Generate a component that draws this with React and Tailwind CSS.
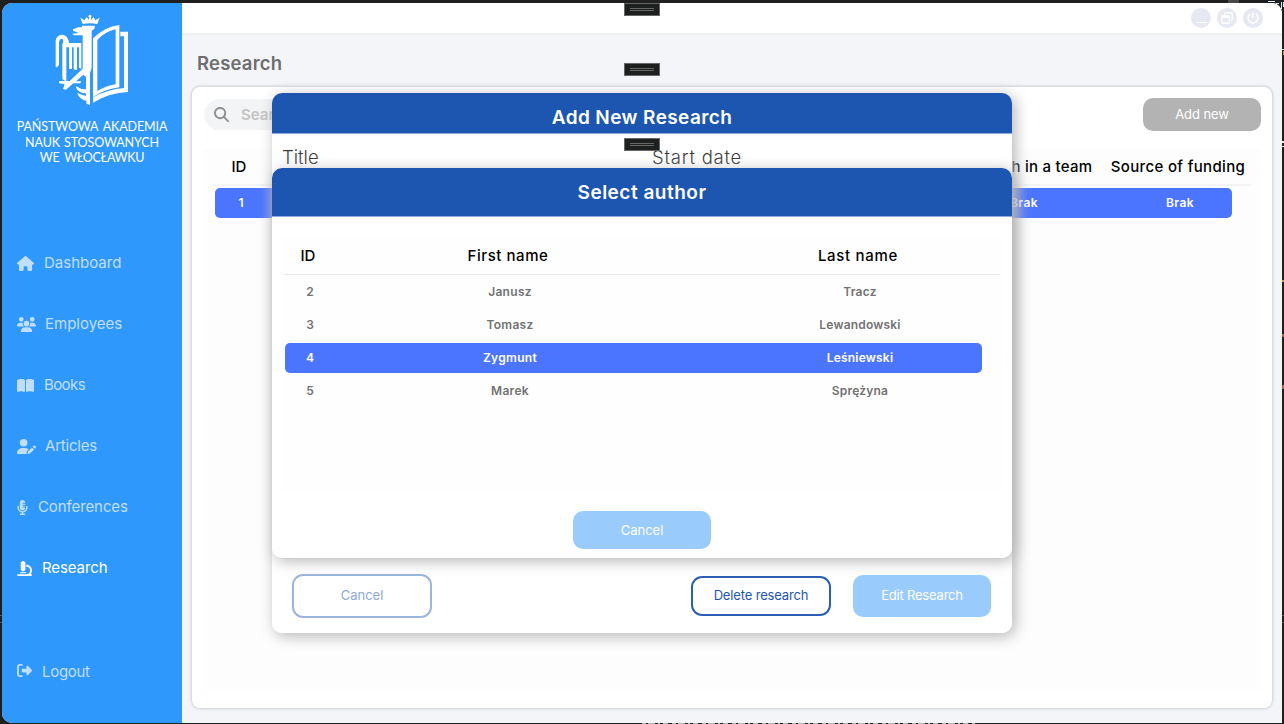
import React from "react";
import {
  FaHouse,
  FaUsers,
  FaBookOpen,
  FaUserPen,
  FaMicrophoneLines,
  FaMicroscope,
  FaRightFromBracket,
  FaMagnifyingGlass,
  FaPowerOff,
} from "react-icons/fa6";

function Logo() {
  return (
    <svg viewBox="0 0 300 315" className="-ml-[4px] h-[105px] w-[100px]" fill="#fff" fillRule="evenodd">
      {/* crown */}
      <path d="M128 57 L121 38 L134 46 L139 36 L147 44 L147 38 Q143 30 150 29 Q157 30 153 38 L153 44 L161 36 L166 46 L179 38 L172 57 Q150 52 128 57Z" />
      {/* head, beak and body */}
      <path d="M126 62 H165 L163 71 L155 77 V188 L150 205 V300 L139 296 V287 Q120 285 111 264 L128 270 Q135 273 138 272 V265 Q115 264 108 248 V244 L125 252 L138 253 V216 L130 209 L108 229 L124 229 L121 235 H100 L78 254 L69 252 L74 238 L57 235 V228 L89 228 L128 191 V91 H101 L97 86 L116 84 L99 77 V73 L115 67 H126Z" />
      {/* wing */}
      <path d="M47 186 V107 Q49 90 67 89 Q84 90 87 114 H124 V192 L117 188 V127 H111 V195 H104 L101 190 V127 H96 V192 H87 V127 H79 V230 L67 222 V118 Q73 105 66 101 Q58 102 57 112 V180 L51 187Z" />
      {/* book */}
      <path d="M159 100 Q192 66 238 60 V247 Q197 252 159 276Z M172 105 V258 Q196 243 227 238 V73 Q191 82 172 105Z" />
      <path d="M241 80 H264 V261 Q208 263 159 293 V277 Q203 253 252 249 V94 H241Z" />
    </svg>
  );
}

const navItems = [
  { icon: FaHouse, label: "Dashboard", box: "w-[17px]", text: "ml-[10px]" },
  { icon: FaUsers, label: "Employees", box: "w-[19px]", text: "ml-[9px]" },
  { icon: FaBookOpen, label: "Books", box: "w-[17px]", text: "ml-[10px] tracking-[-0.6px]" },
  { icon: FaUserPen, label: "Articles", box: "w-[19px]", text: "ml-[9px] tracking-[-0.2px]" },
  { icon: FaMicrophoneLines, label: "Conferences", box: "w-[11px]", text: "ml-[10px] tracking-[-0.1px]" },
  { icon: FaMicroscope, label: "Research", box: "w-[15px]", text: "ml-[10px] tracking-[-0.1px]", active: true },
];

function NavItem({ item }) {
  const Icon = item.icon;
  return (
    <div className={`flex h-[61px] items-center pl-[15px] text-[15px] ${item.active ? "text-white" : "text-[#c0dffe]"}`}>
      <Icon preserveAspectRatio="none" className={`h-[15px] shrink-0 ${item.box}`} />
      <span className={item.text}>{item.label}</span>
    </div>
  );
}

function Sidebar() {
  return (
    <aside className="flex w-[180px] shrink-0 flex-col bg-[#2f98fd]">
      <div className="flex h-[107px] justify-center pt-[2px]">
        <Logo />
      </div>
      <div className="mt-[9px] flex flex-col items-center font-['Lato',sans-serif] text-[12.5px] leading-[15.5px] text-white">
        <span className="tracking-[-0.1px] whitespace-nowrap [word-spacing:2px]">PAŃSTWOWA AKADEMIA</span>
        <span className="tracking-[-0.1px] whitespace-nowrap [word-spacing:1px]">NAUK STOSOWANYCH</span>
        <span className="tracking-[-0.25px] whitespace-nowrap [word-spacing:2px]">WE WŁOCŁAWKU</span>
      </div>
      <nav className="mt-[67px] flex flex-col">
        {navItems.map((item) => (
          <NavItem key={item.label} item={item} />
        ))}
      </nav>
      <div className="mt-[43px]">
        <NavItem item={{ icon: FaRightFromBracket, label: "Logout", box: "w-[15px] -mt-[3px]", text: "ml-[10px] tracking-[-0.3px]" }} />
      </div>
    </aside>
  );
}

function WindowButtons() {
  const round = "flex size-[20px] items-center justify-center rounded-full bg-[#e6e8f2] text-white";
  return (
    <div className="flex gap-[6px]">
      <div className={round}>
        <div className="mt-[9px] h-[1.5px] w-[11px] rounded bg-white" />
      </div>
      <div className={round}>
        <svg viewBox="0 0 12 12" className="size-[12px]" fill="none" stroke="currentColor" strokeWidth="1.4">
          <path d="M3.6 2.6V1.9Q3.6.8 4.7.8H10Q11.2.8 11.2 1.9V7Q11.2 8.2 10 8.2H9.6" />
          <rect x=".8" y="3.8" width="7.6" height="7.4" rx="1" />
          <path d="M1 5H8.2" strokeWidth="2" />
        </svg>
      </div>
      <div className={round}>
        <FaPowerOff className="size-[12px]" />
      </div>
    </div>
  );
}

function MainPanel() {
  return (
    <section className="ml-[10px] flex h-[621px] w-[1080px] flex-col rounded-[8px] bg-white px-[12px] pt-[11px] shadow-[0_0_3px_1px_rgba(0,0,0,0.16)]">
      <div className="flex items-center justify-between">
        <div className="flex h-[31px] w-[300px] items-center rounded-full bg-[#f3f4f6] pl-[10px]">
          <FaMagnifyingGlass className="size-[15px] text-[#8f8f8f]" />
          <span className="ml-[12px] pt-[2px] text-[15px] font-semibold text-[#c3c3c3]">Search...</span>
        </div>
        <div className="-mr-[1px] flex h-[33px] w-[118px] items-center justify-center rounded-[10px] bg-[#b3b3b3] pt-px text-[13px] tracking-[-0.1px] text-white">
          Add new
        </div>
      </div>
      <div className="mt-[18px] h-[541px] bg-[#fdfdfd] pl-[9px]">
        <div className="flex h-[37px] w-[1038px] items-center border-b-2 border-[#f4f4f4] pt-[2px] text-[15px] font-medium whitespace-nowrap text-black">
          <div className="w-[52px] shrink-0 text-center">ID</div>
          <div className="w-[679px] shrink-0" />
          <div className="w-[156px] shrink-0 text-center tracking-[0.25px]">Research in a team</div>
          <div className="w-[156px] shrink-0 text-center tracking-[0.35px]">Source of funding</div>
        </div>
        <div className="mt-[2px] ml-[2px] flex h-[30px] w-[1017px] items-center rounded-[5px] bg-[#4c75ff] text-[12px] font-semibold text-white">
          <div className="w-[52px] shrink-0 text-center">1</div>
          <div className="w-[679px] shrink-0" />
          <div className="w-[156px] shrink-0 text-center tracking-[0.4px]">Brak</div>
          <div className="w-[156px] shrink-0 text-center tracking-[0.4px]">Brak</div>
        </div>
      </div>
    </section>
  );
}

function ResearchDialog() {
  return (
    <div className="absolute top-[93px] left-[272px] flex h-[540px] w-[740px] flex-col overflow-hidden rounded-[10px] bg-white">
      <div className="flex h-[41px] shrink-0 justify-center border-b border-[#8eaad7] bg-[#1d56b0] text-[19px] leading-[50px] font-semibold tracking-[0.4px] text-white">
        Add New Research
      </div>
      <div className="flex h-[46px] items-center pt-px pl-[10px] text-[18.5px] font-light text-[#3c3c3c]">
        <div className="w-[370px]">Title</div>
        <div className="tracking-[0.75px]">Start date</div>
      </div>
      <div className="mt-auto flex h-[74px] items-center px-[20px] text-[13px]">
        <div className="flex h-[44px] w-[140px] items-center justify-center rounded-[11px] border-2 border-[#9cb5dc] text-[#8eaad7]">
          Cancel
        </div>
        <div className="ml-[259px] flex h-[40px] w-[140px] items-center justify-center rounded-[11px] border-2 border-[#2a5fb5] tracking-[-0.15px] text-[#1d56b0]">
          Delete research
        </div>
        <div className="ml-[22px] flex h-[42px] w-[138px] items-center justify-center rounded-[10px] bg-[#99cbfd] tracking-[-0.2px] text-white">
          Edit Research
        </div>
      </div>
    </div>
  );
}

const authors = [
  ["2", "Janusz", "Tracz"],
  ["3", "Tomasz", "Lewandowski"],
  ["4", "Zygmunt", "Leśniewski"],
  ["5", "Marek", "Sprężyna"],
];

function AuthorDialog() {
  return (
    <div className="absolute top-[168px] left-[272px] flex h-[390px] w-[740px] flex-col overflow-hidden rounded-[10px] bg-white">
      <div className="flex h-[49px] shrink-0 justify-center border-b border-[#8eaad7] bg-[#1d56b0] text-[19px] leading-[50px] font-semibold tracking-[0.5px] text-white">
        Select author
      </div>
      <div className="mx-[10px] mt-[20px] h-[254px] overflow-hidden bg-[#fefefe] pl-[1px]">
        <div className="flex h-[38px] w-[717px] items-center border-b border-[#ececec] pt-[2px] text-[15px] font-medium text-black">
          <div className="w-[50px] shrink-0 text-center">ID</div>
          <div className="w-[350px] shrink-0 text-center tracking-[0.55px]">First name</div>
          <div className="w-[350px] shrink-0 text-center tracking-[0.7px]">Last name</div>
        </div>
        <div className="mt-[2px] ml-[2px] flex flex-col gap-[3px]">
          {authors.map(([id, first, last]) => (
            <div
              key={id}
              className={`flex h-[30px] w-[697px] items-center rounded-[5px] text-[12px] font-semibold ${
                id === "4" ? "bg-[#4c75ff] text-white" : "text-[#727272]"
              }`}
            >
              <div className="w-[50px] shrink-0 text-center">{id}</div>
              <div className="w-[350px] shrink-0 text-center tracking-[0.3px]">{first}</div>
              <div className="w-[350px] shrink-0 text-center tracking-[0.2px]">{last}</div>
            </div>
          ))}
        </div>
      </div>
      <div className="mx-auto mt-[20px] flex h-[38px] w-[138px] items-center justify-center rounded-[10px] bg-[#99cbfd] pt-[2px] text-[13px] text-white">
        Cancel
      </div>
    </div>
  );
}

function Grip({ className }) {
  return (
    <div className={`absolute left-[624px] flex h-[13px] w-[36px] flex-col items-center justify-center gap-px border border-[#666] bg-[#1e1f1f] ${className}`}>
      <div className="h-px w-[24px] bg-[#666]" />
      <div className="h-px w-[24px] bg-[#666]" />
    </div>
  );
}

function EdgeMarks() {
  return (
    <svg className="absolute inset-0 h-[724px] w-[1284px]" viewBox="0 0 1284 724">
      <path d="M1228 0h11v3h-11z" fill="#4a4a4a" />
      <path d="M1268 1h7v1h-7zM1276 3h3v1h-3zM1281 2h1v7h-1zM1283 2h1v5h-1z" fill="#dce8f5" />
      <path d="M1282 49h2v1h-2zM1282 141h2v2h-2zM1282 146h2v1h-2z" fill="#e8e8e8" />
      <path d="M1283 51h1v4h-1zM1282 280h2v2h-2z" fill="#c9a227" />
      <path d="M1282 334h2v3h-2zM1282 385h2v4h-2z" fill="#a9604a" />
      <path d="M1282 615h2v1h-2zM1282 622h2v1h-2zM0 615h2v1h-2zM0 622h2v1h-2z" fill="#555" />
      <path d="M642 723.5H975" stroke="#b5b5b5" strokeDasharray="4 2 7 3 2 3 5 4" />
    </svg>
  );
}

export default function App() {
  return (
    <div className="relative h-[724px] w-[1284px] overflow-hidden bg-[#1f1f1f] pt-[3px] pr-[2px] pb-[1px] pl-[2px] font-['Inter',sans-serif]">
      <div className="flex h-[720px] w-[1280px] overflow-hidden rounded-l-[10px] rounded-tr-[10px] bg-[#f4f5f9]">
        <Sidebar />
        <main className="flex flex-1 flex-col">
          <header className="flex h-[32px] items-center justify-end border-b-2 border-[#efeff0] bg-white pr-[19px]">
            <WindowButtons />
          </header>
          <h1 className="flex h-[52px] items-center pt-[6px] pl-[15px] text-[18.5px] font-semibold tracking-[0.2px] text-[#6e6e6e]">
            Research
          </h1>
          <MainPanel />
        </main>
      </div>
      <div className="absolute top-[93px] left-[272px] h-[540px] w-[740px] rounded-[10px] shadow-[3px_3px_15px_#b4b4b4]" />
      <ResearchDialog />
      <div className="absolute top-[168px] left-[272px] h-[390px] w-[740px] rounded-[10px] shadow-[3px_3px_15px_#b4b4b4]" />
      <AuthorDialog />
      <Grip className="top-[3px]" />
      <Grip className="top-[63px]" />
      <Grip className="top-[138px]" />
      <EdgeMarks />
    </div>
  );
}
